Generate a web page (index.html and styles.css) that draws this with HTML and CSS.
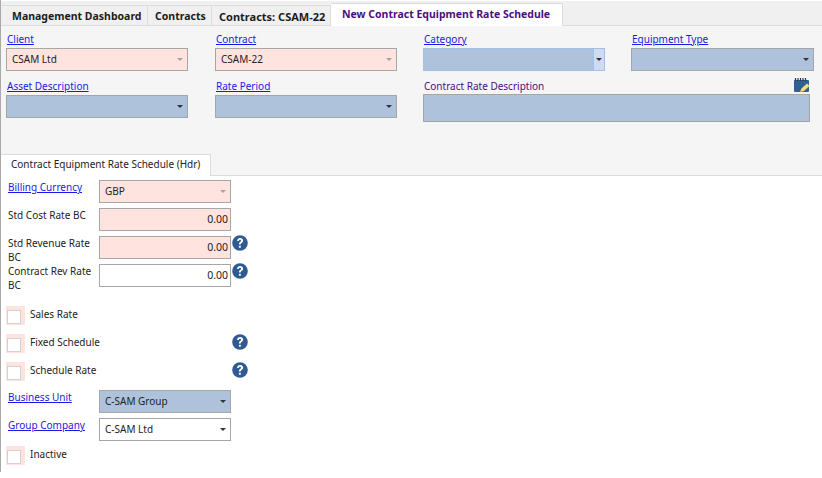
FILE: index.html
```html
<!DOCTYPE html>
<html lang="en">
<head>
<meta charset="utf-8">
<title>New Contract Equipment Rate Schedule</title>
<link rel="stylesheet" href="styles.css">
</head>
<body>
<div class="window">
  <nav class="tabs">
    <span class="tab">Management Dashboard</span>
    <span class="tab tab-b">Contracts</span>
    <span class="tab tab-c">Contracts: CSAM-22</span>
    <span class="tab tab-active">New Contract Equipment Rate Schedule</span>
  </nav>
  <section class="header">
    <div class="field">
      <a class="link">Client</a>
      <div class="select pink disabled"><span>CSAM Ltd</span><i class="caret"></i></div>
    </div>
    <div class="field">
      <a class="link">Contract</a>
      <div class="select pink disabled"><span>CSAM-22</span><i class="caret"></i></div>
    </div>
    <div class="field">
      <a class="link">Category</a>
      <div class="select blue focus"><span></span><b class="drop"><i class="caret"></i></b></div>
    </div>
    <div class="field field-last">
      <a class="link">Equipment Type</a>
      <div class="select blue"><span></span><i class="caret"></i></div>
    </div>
    <div class="field">
      <a class="link">Asset Description</a>
      <div class="select blue"><span></span><i class="caret"></i></div>
    </div>
    <div class="field">
      <a class="link">Rate Period</a>
      <div class="select blue"><span></span><i class="caret"></i></div>
    </div>
    <div class="field wide">
      <div class="wide-head">
        <span class="purple">Contract Rate Description</span>
        <svg class="note" width="16" height="15" viewBox="0 0 16 15" aria-hidden="true">
          <rect x="0" y="2" width="15" height="12" rx="1" fill="#2f6096"/>
          <path d="M1.500 0v3M4 0v3M6.500 0v3M9 0v3M11.500 0v3" stroke="#26364a" stroke-width="1.200"/>
          <path d="M6 14l1.500-3.500 5.500-5 2.500 2.500-5.500 5z" fill="#efe07a"/>
        </svg>
      </div>
      <div class="textarea"></div>
    </div>
  </section>
  <div class="subtabs"><span class="subtab">Contract Equipment Rate Schedule (Hdr)</span></div>
  <section class="form">
    <a class="link lab">Billing Currency</a>
    <div class="select pink disabled ctl"><span>GBP</span><i class="caret"></i></div>
    <span></span>

    <span class="lab">Std Cost Rate BC</span>
    <div class="input pink ctl">0.00</div>
    <span></span>

    <span class="lab">Std Revenue Rate BC</span>
    <div class="input pink ctl">0.00</div>
    <svg class="help" viewBox="0 0 16 16" aria-hidden="true"><use href="#q"/></svg>

    <span class="lab">Contract Rev Rate BC</span>
    <div class="input white ctl">0.00</div>
    <svg class="help" viewBox="0 0 16 16" aria-hidden="true"><use href="#q"/></svg>

    <label class="check first"><i class="box"></i><span>Sales Rate</span></label>
    <span class="first"></span>

    <label class="check"><i class="box"></i><span>Fixed Schedule</span></label>
    <svg class="help centered" viewBox="0 0 16 16" aria-hidden="true"><use href="#q"/></svg>

    <label class="check"><i class="box"></i><span>Schedule Rate</span></label>
    <svg class="help centered" viewBox="0 0 16 16" aria-hidden="true"><use href="#q"/></svg>

    <a class="link lab">Business Unit</a>
    <div class="select blue ctl"><span>C-SAM Group</span><i class="caret"></i></div>
    <span></span>

    <a class="link lab">Group Company</a>
    <div class="select white ctl"><span>C-SAM Ltd</span><i class="caret"></i></div>
    <span></span>

    <label class="check"><i class="box"></i><span>Inactive</span></label>
    <span></span>
  </section>
</div>
<svg width="0" height="0" class="defs" aria-hidden="true">
  <symbol id="q" viewBox="0 0 16 16">
    <circle cx="8" cy="8" r="7.800" fill="#2f5b92"/>
    <path d="M5.100 6c0-1.900 1.300-3 3-3s3 1 3 2.500c0 1.200-.7 1.800-1.500 2.400-.7.500-.9.800-.9 1.600H6.900c0-1.200.3-1.900 1.200-2.500.6-.4.900-.7.900-1.300 0-.5-.4-.9-1-.9-.7 0-1.100.4-1.200 1.200z" fill="#fff"/>
    <rect x="6.900" y="10.800" width="1.900" height="1.900" fill="#fff"/>
  </symbol>
</svg>
</body>
</html>
```
FILE: styles.css
```css
* { box-sizing: border-box; }
html, body { margin: 0; padding: 0; background: #fff; }
body {
  width: 822px;
  height: 478px;
  overflow: hidden;
  font-family: "Noto Sans", "Open Sans", sans-serif;
  font-size: 10px;
  color: #222;
}
.defs { position: absolute; }
.window {
  height: 472px;
  border-left: 1px solid #a9a9a9;
  background: #fff;
  padding-top: 1px;
}
.tabs {
  height: 25px;
  display: flex;
  align-items: flex-end;
  background: #f0f0f0;
  border-bottom: 1px solid #dcdcdc;
  padding-left: 1px;
}
.tab {
  height: 20px;
  border: 1px solid #dcdcdc;
  border-bottom: 0;
  border-left: 0;
  background: #f0f0f0;
  font-weight: 700;
  font-size: 10.500px;
  color: #1c1c1c;
  padding: 3px 0 0 10px;
  white-space: nowrap;
  width: 146px;
}
.tab-b { width: 64px; padding-left: 7px; }
.tab-c { width: 119px; padding-left: 7px; font-size: 11px; }
.tab-active {
  width: 232px;
  height: 23px;
  margin-bottom: -1px;
  background: #fff;
  color: #4b0f7f;
  padding: 3px 0 0 11px;
}
.header {
  height: 126px;
  background: #f5f5f5;
  padding: 6px 0 0 5px;
  display: grid;
  grid-template-columns: 209px 208px 208px 183px;
  grid-template-rows: 41px 46px;
  row-gap: 6px;
}
.field { display: flex; flex-direction: column; min-width: 0; }
.link {
  color: #1a1ae6;
  text-decoration: underline;
  line-height: 14px;
  height: 16px;
  white-space: nowrap;
  margin-left: 1px;
}
.select, .input {
  height: 23px;
  border: 1px solid #a6a6a6;
  display: flex;
  align-items: center;
}
.select { padding-left: 5px; justify-content: space-between; }
.select span { flex: 1; margin-top: -1px; }
.header .select { width: 182px; }
.header .field-last .select { width: 183px; }
.pink { background: #ffe3df; }
.blue { background: #aec2dc; }
.white { background: #fff; }
.caret {
  width: 0;
  height: 0;
  border: 3px solid transparent;
  border-top: 3px solid #333;
  border-bottom: 0;
  margin-right: 4px;
  flex: none;
}
.disabled .caret { border-top-color: #a5a5a5; }
.focus { border-color: #a3bfe6; padding-right: 0; }
.drop {
  width: 11px;
  height: 21px;
  background: #cfdcf0;
  border-left: 1px solid #a3bfe6;
  display: flex;
  align-items: center;
  justify-content: center;
}
.drop .caret { margin: 0; }
.wide { grid-column: span 2; width: 387px; margin-top: -3px; }
.wide-head {
  height: 18px;
  display: flex;
  justify-content: space-between;
  align-items: flex-start;
  padding: 3px 0 0 1px;
}
.purple { color: #4b0f7f; line-height: 14px; }
.note { margin-top: -1px; }
.textarea {
  height: 28px;
  border: 1px solid #a6a6a6;
  background: #aec2dc;
}
.subtabs {
  height: 24px;
  background: #f5f5f5;
  border-bottom: 1px solid #dcdcdc;
  display: flex;
  align-items: flex-end;
}
.subtab {
  width: 210px;
  height: 22px;
  margin-bottom: -1px;
  background: #fff;
  border: 1px solid #dcdcdc;
  border-bottom: 0;
  border-left: 0;
  padding: 2px 0 0 10px;
  white-space: nowrap;
}
.form {
  padding: 4px 0 0 5px;
  display: grid;
  grid-template-columns: 93px 132px 18px;
  grid-auto-rows: minmax(23px, auto);
  row-gap: 5px;
  width: 260px;
}
.lab { margin: 0 0 0 2px; height: 23px; padding-top: 0; line-height: 14px; }
.form .lab { white-space: normal; }
.input { justify-content: flex-end; padding: 0 2px 1px 0; font-size: 10.500px; }
.help {
  width: 16px;
  height: 16px;
  margin: -1px 0 0 1px;
}
.help.centered { margin-top: 0; }
.check {
  grid-column: 1 / span 2;
  height: 23px;
  display: flex;
  align-items: flex-start;
  gap: 5px;
}
.check.first, .first { margin-top: 14px; }
.box {
  width: 19px;
  height: 19px;
  background: #ffe3df;
  padding: 4px 0 0 1px;
  display: block;
}
.box::before {
  content: "";
  display: block;
  width: 12px;
  height: 12px;
  background: #fff;
  border: 1px solid #d2d2d2;
}
.check span { padding-top: 1px; line-height: 14px; }
```
